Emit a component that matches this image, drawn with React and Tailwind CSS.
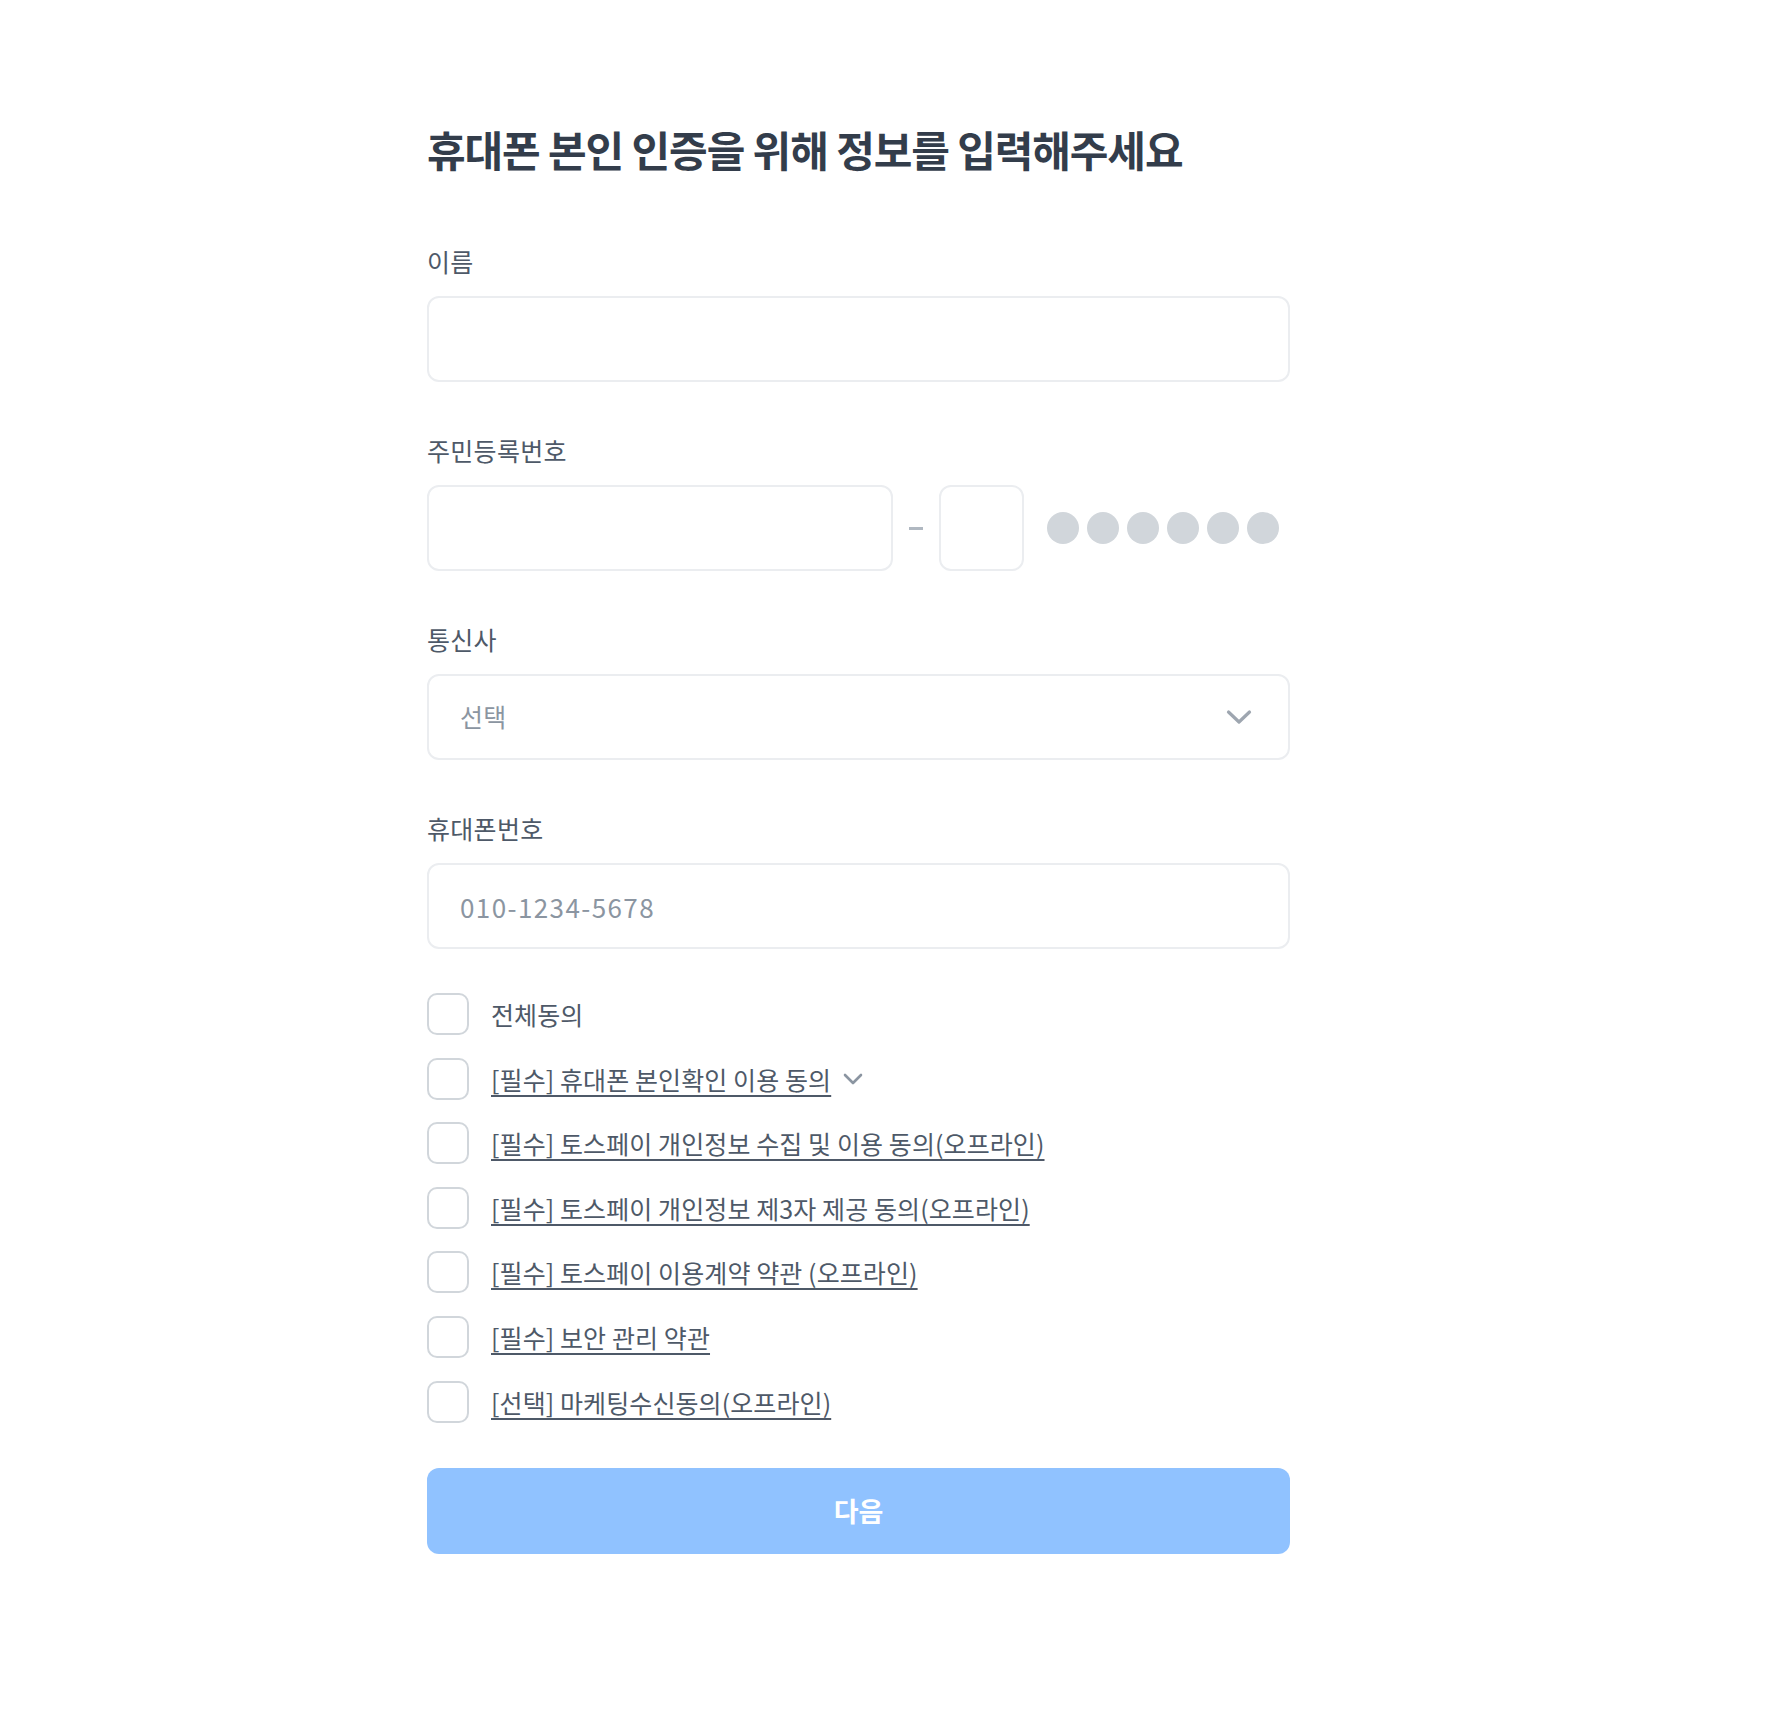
const terms = [
  { label: '전체동의', link: false },
  { label: '[필수] 휴대폰 본인확인 이용 동의', link: true, expand: true },
  { label: '[필수] 토스페이 개인정보 수집 및 이용 동의(오프라인)', link: true },
  { label: '[필수] 토스페이 개인정보 제3자 제공 동의(오프라인)', link: true },
  { label: '[필수] 토스페이 이용계약 약관 (오프라인)', link: true },
  { label: '[필수] 보안 관리 약관', link: true },
  { label: '[선택] 마케팅수신동의(오프라인)', link: true },
];

function Label({ children }) {
  return (
    <div className="text-[25px] leading-[32px] tracking-[0.3px] text-[#4e5968] mb-[19px]">
      {children}
    </div>
  );
}

export default function App() {
  return (
    <div
      className="min-h-[1728px] bg-white pl-[427px] pt-[121px]"
      style={{ fontFamily: '"Noto Sans CJK KR", "Noto Sans", sans-serif' }}
    >
      <div className="w-[863px] flex flex-col">
        <h1 className="text-[42px] leading-[56px] font-bold tracking-[-1.1px] text-[#333d4b] mb-[68px]">
          휴대폰 본인 인증을 위해 정보를 입력해주세요
        </h1>

        <Label>이름</Label>
        <input
          type="text"
          className="h-[86px] w-full rounded-[12px] border-2 border-[#ebedf0] px-[31px] text-[26px] outline-none mb-[52px]"
        />

        <Label>주민등록번호</Label>
        <div className="flex items-center mb-[52px]">
          <input
            type="text"
            className="h-[86px] w-[466px] rounded-[12px] border-2 border-[#ebedf0] px-[31px] text-[26px] outline-none"
          />
          <div className="w-[14px] h-[3px] bg-[#b0b8c1] mx-[16px]" />
          <input
            type="text"
            className="h-[86px] w-[85px] rounded-[12px] border-2 border-[#ebedf0] text-center text-[26px] outline-none"
          />
          <div className="flex gap-[8px] ml-[23px]">
            {[0, 1, 2, 3, 4, 5].map((i) => (
              <div key={i} className="w-[32px] h-[32px] rounded-full bg-[#d1d6db]" />
            ))}
          </div>
        </div>

        <Label>통신사</Label>
        <div className="h-[86px] w-full rounded-[12px] border-2 border-[#ebedf0] pl-[31px] pr-[36px] flex items-center justify-between mb-[52px]">
          <span className="text-[25px] tracking-[0.3px] text-[#8b95a1]">선택</span>
          <svg width="26" height="16" viewBox="0 0 26 16" fill="none">
            <path d="M2.5 3 L13 13 L23.5 3" stroke="#9ea6b0" strokeWidth="3.2" strokeLinecap="round" strokeLinejoin="round" />
          </svg>
        </div>

        <Label>휴대폰번호</Label>
        <input
          type="text"
          placeholder="010-1234-5678"
          className="h-[86px] w-full rounded-[12px] border-2 border-[#ebedf0] px-[31px] text-[26px] tracking-[1.4px] text-[#333d4b] placeholder:text-[#8b95a1] outline-none mb-[44px]"
        />

        <div className="flex flex-col gap-[22.6px] mb-[45.4px]">
          {terms.map((t) => (
            <div key={t.label} className="flex items-center h-[42px]">
              <div className="w-[42px] h-[42px] rounded-[10px] border-[2.5px] border-[#d1d6db] shrink-0" />
              <span
                className={
                  t.link
                    ? 'ml-[22px] text-[25px] leading-[32px] tracking-[0.1px] text-[#4e5968] underline decoration-[1.5px] underline-offset-[5px]'
                    : 'ml-[22px] text-[25px] leading-[32px] tracking-[0.1px] text-[#4e5968]'
                }
              >
                {t.label}
              </span>
              {t.expand && (
                <svg width="20" height="12" viewBox="0 0 20 12" fill="none" className="ml-[12px]">
                  <path d="M2 2 L10 10 L18 2" stroke="#8b95a1" strokeWidth="2.6" strokeLinecap="round" strokeLinejoin="round" />
                </svg>
              )}
            </div>
          ))}
        </div>

        <button
          type="button"
          className="h-[86px] w-full rounded-[12px] bg-[#90c2ff] text-white text-[27px] font-bold"
        >
          다음
        </button>
      </div>
    </div>
  );
}
